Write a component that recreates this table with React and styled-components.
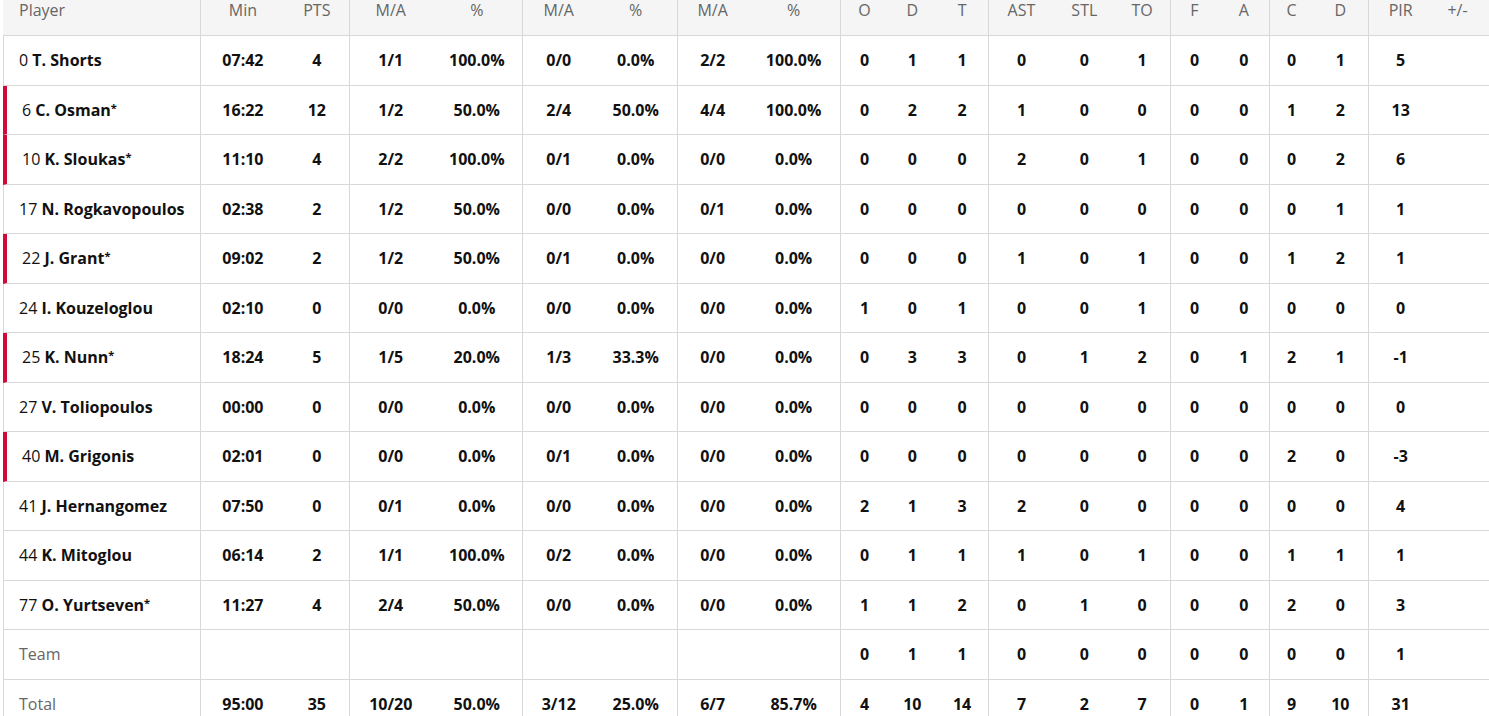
import React from "react";
import styled, { createGlobalStyle } from "styled-components";

const Global = createGlobalStyle`
  html, body { margin: 0; padding: 0; background: #fff; overflow: hidden; }
  body { font-family: "Open Sans", Lato, Arial, sans-serif; color: #111; }
`;

const Wrap = styled.div`
  padding-left: 3px;
  width: 1520px;
`;

const Table = styled.table`
  border-collapse: separate;
  border-spacing: 0;
  table-layout: fixed;
  width: 1515px;
`;

const Col = styled.col`
  width: ${(p) => p.$w}px;
`;

const HeadRow = styled.tr`
  background: #f5f5f5;
  height: 36px;
`;

const HeadCell = styled.th`
  font-weight: 400;
  font-size: 16px;
  color: #666;
  line-height: 20px;
  padding: 0 0 15px;
  vertical-align: top;
  text-align: ${(p) => (p.$left ? "left" : "center")};
  padding-left: ${(p) => (p.$left ? "16px" : "0")};
  border-bottom: 1px solid #d8d8d8;
  border-left: ${(p) => (p.$sep ? "1px solid #d8d8d8" : "none")};
  box-sizing: border-box;
  white-space: nowrap;
`;

const Row = styled.tr`
  height: 49.5px;
`;

const Cell = styled.td`
  font-size: 16px;
  font-weight: 700;
  color: #111;
  text-align: center;
  vertical-align: middle;
  padding: 0;
  border-bottom: 1px solid #d8d8d8;
  border-left: ${(p) => (p.$sep ? "1px solid #d8d8d8" : "none")};
  white-space: nowrap;
`;

const PlayerCell = styled.td`
  text-align: left;
  vertical-align: middle;
  padding: 0 0 0 15px;
  border-bottom: 1px solid #d8d8d8;
  border-left: ${(p) => (p.$starter ? "4px solid #d20a3c" : "1px solid #d8d8d8")};
  white-space: nowrap;
  color: ${(p) => (p.$muted ? "#666" : "#111")};
  font-weight: ${(p) => (p.$muted ? 400 : 700)};
  font-size: 16px;
`;

const Num = styled.span`
  font-weight: 400;
`;

const Star = styled.span`
  font-size: 11px;
  vertical-align: 4px;
  line-height: 0;
`;

const cols = [
  { key: "Player", w: 196, left: true },
  { key: "Min", w: 84, sep: true },
  { key: "PTS", w: 64 },
  { key: "M/A", w: 82, sep: true },
  { key: "%", w: 90 },
  { key: "M/A", w: 72, sep: true },
  { key: "%", w: 82 },
  { key: "M/A", w: 70, sep: true },
  { key: "%", w: 92 },
  { key: "O", w: 48, sep: true },
  { key: "D", w: 48 },
  { key: "T", w: 51 },
  { key: "AST", w: 66, sep: true },
  { key: "STL", w: 60 },
  { key: "TO", w: 55 },
  { key: "F", w: 48, sep: true },
  { key: "A", w: 51 },
  { key: "C", w: 43, sep: true },
  { key: "D", w: 55 },
  { key: "PIR", w: 64, sep: true },
  { key: "+/-", w: 50 },
  { key: "", w: 35 },
];

const players = [
  { n: "0", name: "T. Shorts", s: false, v: ["07:42", "4", "1/1", "100.0%", "0/0", "0.0%", "2/2", "100.0%", "0", "1", "1", "0", "0", "1", "0", "0", "0", "1", "5", ""] },
  { n: "6", name: "C. Osman", st: true, s: true, v: ["16:22", "12", "1/2", "50.0%", "2/4", "50.0%", "4/4", "100.0%", "0", "2", "2", "1", "0", "0", "0", "0", "1", "2", "13", ""] },
  { n: "10", name: "K. Sloukas", st: true, s: true, v: ["11:10", "4", "2/2", "100.0%", "0/1", "0.0%", "0/0", "0.0%", "0", "0", "0", "2", "0", "1", "0", "0", "0", "2", "6", ""] },
  { n: "17", name: "N. Rogkavopoulos", s: false, v: ["02:38", "2", "1/2", "50.0%", "0/0", "0.0%", "0/1", "0.0%", "0", "0", "0", "0", "0", "0", "0", "0", "0", "1", "1", ""] },
  { n: "22", name: "J. Grant", st: true, s: true, v: ["09:02", "2", "1/2", "50.0%", "0/1", "0.0%", "0/0", "0.0%", "0", "0", "0", "1", "0", "1", "0", "0", "1", "2", "1", ""] },
  { n: "24", name: "I. Kouzeloglou", s: false, v: ["02:10", "0", "0/0", "0.0%", "0/0", "0.0%", "0/0", "0.0%", "1", "0", "1", "0", "0", "1", "0", "0", "0", "0", "0", ""] },
  { n: "25", name: "K. Nunn", st: true, s: true, v: ["18:24", "5", "1/5", "20.0%", "1/3", "33.3%", "0/0", "0.0%", "0", "3", "3", "0", "1", "2", "0", "1", "2", "1", "-1", ""] },
  { n: "27", name: "V. Toliopoulos", s: false, v: ["00:00", "0", "0/0", "0.0%", "0/0", "0.0%", "0/0", "0.0%", "0", "0", "0", "0", "0", "0", "0", "0", "0", "0", "0", ""] },
  { n: "40", name: "M. Grigonis", s: true, v: ["02:01", "0", "0/0", "0.0%", "0/1", "0.0%", "0/0", "0.0%", "0", "0", "0", "0", "0", "0", "0", "0", "2", "0", "-3", ""] },
  { n: "41", name: "J. Hernangomez", s: false, v: ["07:50", "0", "0/1", "0.0%", "0/0", "0.0%", "0/0", "0.0%", "2", "1", "3", "2", "0", "0", "0", "0", "0", "0", "4", ""] },
  { n: "44", name: "K. Mitoglou", s: false, v: ["06:14", "2", "1/1", "100.0%", "0/2", "0.0%", "0/0", "0.0%", "0", "1", "1", "1", "0", "1", "0", "0", "1", "1", "1", ""] },
  { n: "77", name: "O. Yurtseven", st: true, s: false, v: ["11:27", "4", "2/4", "50.0%", "0/0", "0.0%", "0/0", "0.0%", "1", "1", "2", "0", "1", "0", "0", "0", "2", "0", "3", ""] },
];

const team = ["", "", "", "", "", "", "", "", "0", "1", "1", "0", "0", "0", "0", "0", "0", "0", "1", ""];
const total = ["95:00", "35", "10/20", "50.0%", "3/12", "25.0%", "6/7", "85.7%", "4", "10", "14", "7", "2", "7", "0", "1", "9", "10", "31", ""];

function StatCells({ values }) {
  return [...values, ""].map((v, i) => (
    <Cell key={i} $sep={cols[i + 1].sep}>
      {v}
    </Cell>
  ));
}

export default function App() {
  return (
    <>
      <Global />
      <Wrap>
        <Table>
          <colgroup>
            {cols.map((c, i) => (
              <Col key={i} $w={c.w} />
            ))}
          </colgroup>
          <thead>
            <HeadRow>
              {cols.map((c, i) => (
                <HeadCell key={i} $left={c.left} $sep={c.sep}>
                  {c.key}
                </HeadCell>
              ))}
            </HeadRow>
          </thead>
          <tbody>
            {players.map((p) => (
              <Row key={p.n}>
                <PlayerCell $starter={p.s}>
                  <Num>{p.n}</Num> {p.name}
                  {p.st && <Star>*</Star>}
                </PlayerCell>
                <StatCells values={p.v} />
              </Row>
            ))}
            <Row>
              <PlayerCell $muted>Team</PlayerCell>
              <StatCells values={team} />
            </Row>
            <Row>
              <PlayerCell $muted>Total</PlayerCell>
              <StatCells values={total} />
            </Row>
          </tbody>
        </Table>
      </Wrap>
    </>
  );
}
